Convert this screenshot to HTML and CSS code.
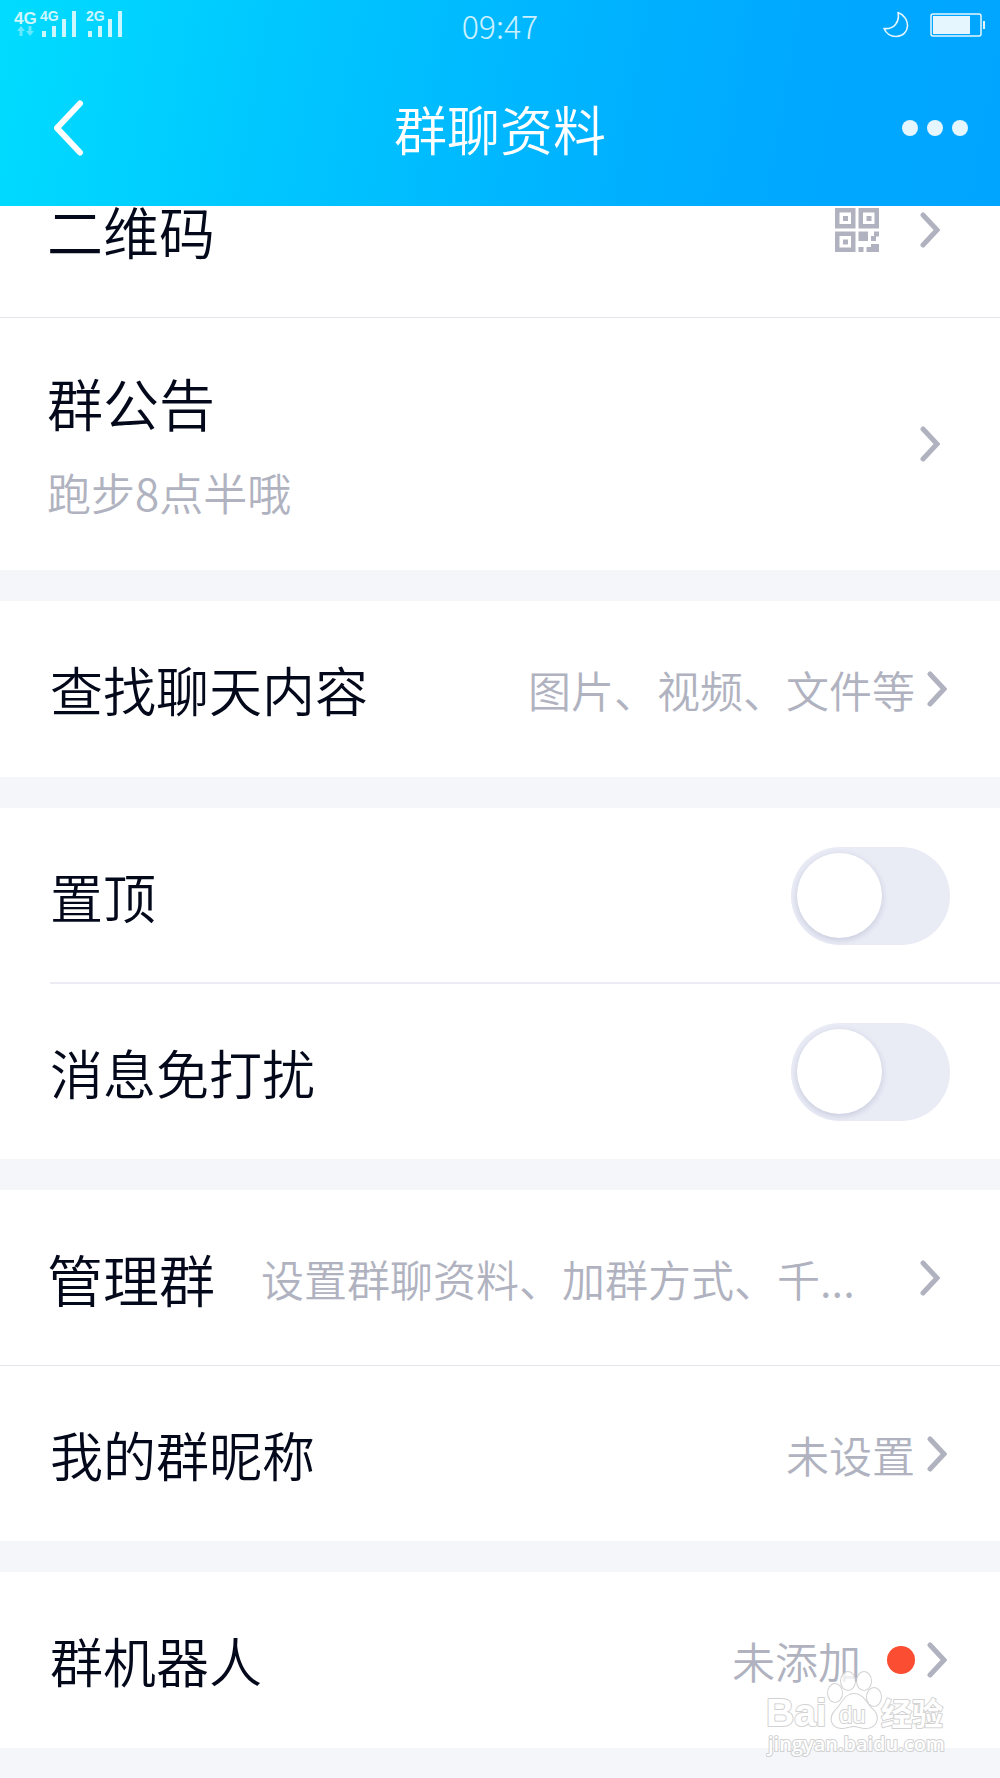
FILE: index.html
```html
<!DOCTYPE html>
<html lang="zh-CN">
<head>
  <meta charset="UTF-8" />
  <meta name="viewport" content="width=device-width, initial-scale=1.0" />
  <title>群聊资料</title>
  <link rel="stylesheet" href="styles.css">
</head>
<body>
  <svg class="symbols" aria-hidden="true">
    <symbol id="icon-arrow" viewBox="0 0 20 36">
      <path d="M3 3 L17 18 L3 33" fill="none" stroke="currentColor" stroke-width="5" stroke-linecap="round" stroke-linejoin="miter" />
    </symbol>
  </svg>

  <header class="header">
    <!-- 状态栏 -->
    <div class="status-bar">
      <div class="status-left">
        <svg class="signal" viewBox="0 -6 112 40" aria-hidden="true">
          <g fill="#fff" font-family="Liberation Sans, sans-serif" font-weight="bold">
            <g opacity="0.8">
              <text x="0" y="13" font-size="17">4G</text>
              <text x="26" y="10" font-size="14">4G</text>
              <text x="72" y="10" font-size="14">2G</text>
            </g>
            <path opacity="0.4" d="M7 15 L11 20 H8.500 V25 H5.500 V20 H3 Z M16 25 L20 20 H17.500 V15 H14.500 V20 H12 Z" />
            <path opacity="0.8" d="M28 20h4v6h-4z M38 15h4v11h-4z M48 8h4v18h-4z M58 0h4v26h-4z M74 20h4v6h-4z M84 15h4v11h-4z M94 8h4v18h-4z M104 0h4v26h-4z" />
          </g>
        </svg>
      </div>
      <span class="time">09:47</span>
      <div class="status-right">
        <svg class="moon" viewBox="0 0 28 28" aria-hidden="true">
          <path d="M16 1.500 C29 6 29 25 14 25.500 C8 25.500 4 22 2 17.500 C12 18.500 18 11 16 1.500 Z" fill="none" stroke="#fff" stroke-width="1.600" stroke-linejoin="round" />
        </svg>
        <svg class="battery" viewBox="0 0 56 24" aria-hidden="true">
          <rect x="1" y="1" width="50" height="22" rx="2" fill="none" stroke="#fff" stroke-width="1.500" />
          <rect x="3" y="3" width="37" height="18" fill="#fff" />
          <rect x="53" y="8" width="2" height="8" fill="#fff" />
        </svg>
      </div>
    </div>
    <!-- 标题栏 -->
    <div class="nav-bar">
      <button class="btn-back" type="button" aria-label="返回">
        <svg viewBox="0 0 30 56" aria-hidden="true">
          <path d="M26 3.500 L3 28 L26 52.500" fill="none" stroke="#fff" stroke-width="6" stroke-linecap="round" />
        </svg>
      </button>
      <h1 class="title">群聊资料</h1>
      <button class="btn-more" type="button" aria-label="更多">
        <i></i><i></i><i></i>
      </button>
    </div>
  </header>

  <main class="main">
    <section class="group">
      <a class="row row-line" href="#qrcode">
        <span class="label label-big">二维码</span>
        <svg class="qrcode" viewBox="0 0 44 44" aria-hidden="true">
          <path fill="#b0b3bf" fill-rule="evenodd" d="M0 0h20.500v20.500h-20.500z M4.500 4.500v11.500h11.500v-11.500z M8 8h5v5h-5z M23.500 0h20.500v20.500h-20.500z M28 4.500v11.500h11.500v-11.500z M31.500 8h5v5h-5z M0 23.500h20.500v20.500h-20.500z M4.500 28v11.500h11.500v-11.500z M8 31.500h5v5h-5z M23.500 23.500h9.500v9.500h-9.500z M39 23.500h5v5h-3v4.500h-5v-5h3z M23.500 39h5v5h-5z M36 36h8v8h-12.500v-5h4.500z" />
        </svg>
        <svg class="arrow arrow-wide"><use href="#icon-arrow" /></svg>
      </a>
      <a class="row row-notice" href="#notice">
        <span class="notice">
          <span class="label label-big">群公告</span>
          <span class="value">跑步8点半哦</span>
        </span>
        <svg class="arrow arrow-wide"><use href="#icon-arrow" /></svg>
      </a>
    </section>

    <section class="group">
      <a class="row" href="#search">
        <span class="label">查找聊天内容</span>
        <span class="value">图片、视频、文件等</span>
        <svg class="arrow"><use href="#icon-arrow" /></svg>
      </a>
    </section>

    <section class="group">
      <div class="row row-inset">
        <label class="label" for="set-top">置顶</label>
        <input class="switch" type="checkbox" id="set-top" />
      </div>
      <div class="row">
        <label class="label" for="set-mute">消息免打扰</label>
        <input class="switch" type="checkbox" id="set-mute" />
      </div>
    </section>

    <section class="group">
      <a class="row row-line" href="#manage">
        <span class="label label-big">管理群</span>
        <span class="value value-left">设置群聊资料、加群方式、千...</span>
        <svg class="arrow arrow-wide"><use href="#icon-arrow" /></svg>
      </a>
      <a class="row" href="#nickname">
        <span class="label">我的群昵称</span>
        <span class="value">未设置</span>
        <svg class="arrow"><use href="#icon-arrow" /></svg>
      </a>
    </section>

    <section class="group">
      <a class="row" href="#robot">
        <span class="label">群机器人</span>
        <span class="value">未添加</span>
        <i class="dot"></i>
        <svg class="arrow"><use href="#icon-arrow" /></svg>
      </a>
    </section>
  </main>

  <!-- 水印 -->
  <svg class="watermark" viewBox="0 0 184 88" role="img" aria-label="Baidu经验 jingyan.baidu.com">
    <g fill="#fff" stroke="#c8c8c8" stroke-width="2" paint-order="stroke" stroke-linejoin="round">
      <g font-family="Liberation Sans, sans-serif" font-weight="bold">
        <text x="0" y="56" font-size="39">Bai</text>
        <text x="115" y="55" font-size="31" font-family="Noto Sans CJK SC, sans-serif">经验</text>
      </g>
      <ellipse cx="69" cy="23" rx="7" ry="9" />
      <ellipse cx="82" cy="11" rx="7" ry="9" />
      <ellipse cx="98" cy="11" rx="7" ry="9" />
      <ellipse cx="108" cy="27" rx="7" ry="9" />
      <path d="M88 24 C98 24 100 34 108 41 C114 48 110 58 100 58 C94 58 92 56 88 56 C84 56 81 58 75 58 C65 57 63 48 69 41 C76 35 78 24 88 24 Z" />
      <text x="73" y="53" font-size="24" font-family="Liberation Sans, sans-serif">du</text>
      <text x="2" y="81" font-size="20" font-family="Open Sans, sans-serif" font-weight="600">jingyan.baidu.com</text>
    </g>
  </svg>
</body>
</html>
```
FILE: styles.css
```css
* {
  box-sizing: border-box;
}
body {
  margin: 0;
  font-family: "Noto Sans CJK SC", sans-serif;
  font-weight: 350;
  background: #f4f6fa;
  color: #03081a;
  min-height: 100vh;
  overflow-x: hidden;
  position: relative;
}
.symbols {
  display: none;
}
.header {
  position: sticky;
  top: 0;
  z-index: 1;
  height: 206px;
  color: #fff;
  background: linear-gradient(100deg, #00dcff 0%, #00c4ff 32%, #00b3ff 58%, #00a8ff 80%, #00a5ff 100%);
}
.status-bar {
  display: grid;
  grid-template-columns: 1fr auto 1fr;
  align-items: center;
  height: 50px;
  padding: 0 14px;
}
.signal {
  display: block;
  width: 112px;
  height: 40px;
}
.time {
  font-size: 32px;
  font-weight: 300;
  line-height: 48px;
  opacity: 0.8;
}
.status-right {
  display: flex;
  justify-content: flex-end;
  align-items: center;
  gap: 20px;
  opacity: 0.9;
}
.moon {
  width: 28px;
  height: 28px;
}
.battery {
  width: 56px;
  height: 24px;
}
.nav-bar {
  display: grid;
  grid-template-columns: 1fr auto 1fr;
  align-items: center;
  height: 156px;
  padding: 0 32px;
}
button {
  padding: 0;
  border: none;
  background: none;
  cursor: pointer;
}
.btn-back {
  justify-self: start;
  margin-left: 22px;
}
.btn-back svg {
  display: block;
  width: 30px;
  height: 56px;
}
.title {
  margin: 0;
  font-size: 53px;
  font-weight: 350;
}
.btn-more {
  justify-self: end;
  display: flex;
  gap: 9px;
}
.btn-more i {
  width: 16px;
  height: 16px;
  border-radius: 50%;
  background: #e5f6ff;
}
/* 列表已向上滚动一段，首行被标题栏遮住 */
.main {
  margin-top: -64px;
}
.group {
  margin-bottom: 31px;
  background: #fff;
}
.row {
  display: flex;
  align-items: center;
  min-height: 176px;
  padding: 0 50px;
  color: inherit;
  text-decoration: none;
  position: relative;
}
.row + .row {
  min-height: 175px;
}
.row-line {
  border-bottom: 1px solid #e3e4ea;
}
.row-inset::after {
  content: "";
  position: absolute;
  left: 50px;
  right: 0;
  bottom: 0;
  height: 2px;
  background: #ebecf4;
}
.row + .row-notice {
  min-height: 252px;
}
.label {
  flex: 1;
  font-size: 53px;
  line-height: 80px;
  white-space: nowrap;
}
.label-big {
  font-size: 56px;
  line-height: 76px;
  margin-left: -3px;
}
.value {
  font-size: 43px;
  line-height: 64px;
  color: #b0b3bf;
  white-space: nowrap;
}
.value-left {
  flex: 5;
  margin-left: 46px;
}
.notice {
  flex: 1;
  display: flex;
  flex-direction: column;
  gap: 20px;
}
.notice .value {
  font-size: 44px;
  margin-left: -3px;
}
.arrow {
  flex: none;
  width: 20px;
  height: 36px;
  margin-left: 12px;
  margin-right: 3px;
  color: #b0b3bf;
}
.arrow-wide {
  margin-left: 41px;
  margin-right: 10px;
}
.qrcode {
  width: 44px;
  height: 44px;
}
.switch {
  appearance: none;
  width: 159px;
  height: 98px;
  margin: 0;
  padding: 6px;
  border-radius: 49px;
  background: #e9ebf5;
  cursor: pointer;
}
.switch::before {
  content: "";
  display: block;
  width: 85px;
  height: 85px;
  border-radius: 50%;
  background: #fff;
  box-shadow: 0 2px 6px rgba(60, 70, 120, 0.2);
}
.switch:checked {
  background: #12b7f5;
}
.switch:checked::before {
  margin-left: auto;
}
.dot {
  width: 28px;
  height: 28px;
  margin-left: 26px;
  border-radius: 50%;
  background: #fa4d32;
}
.watermark {
  position: absolute;
  right: 50px;
  bottom: 21px;
  width: 184px;
  height: 88px;
  z-index: 2;
  opacity: 0.8;
  pointer-events: none;
}
```
